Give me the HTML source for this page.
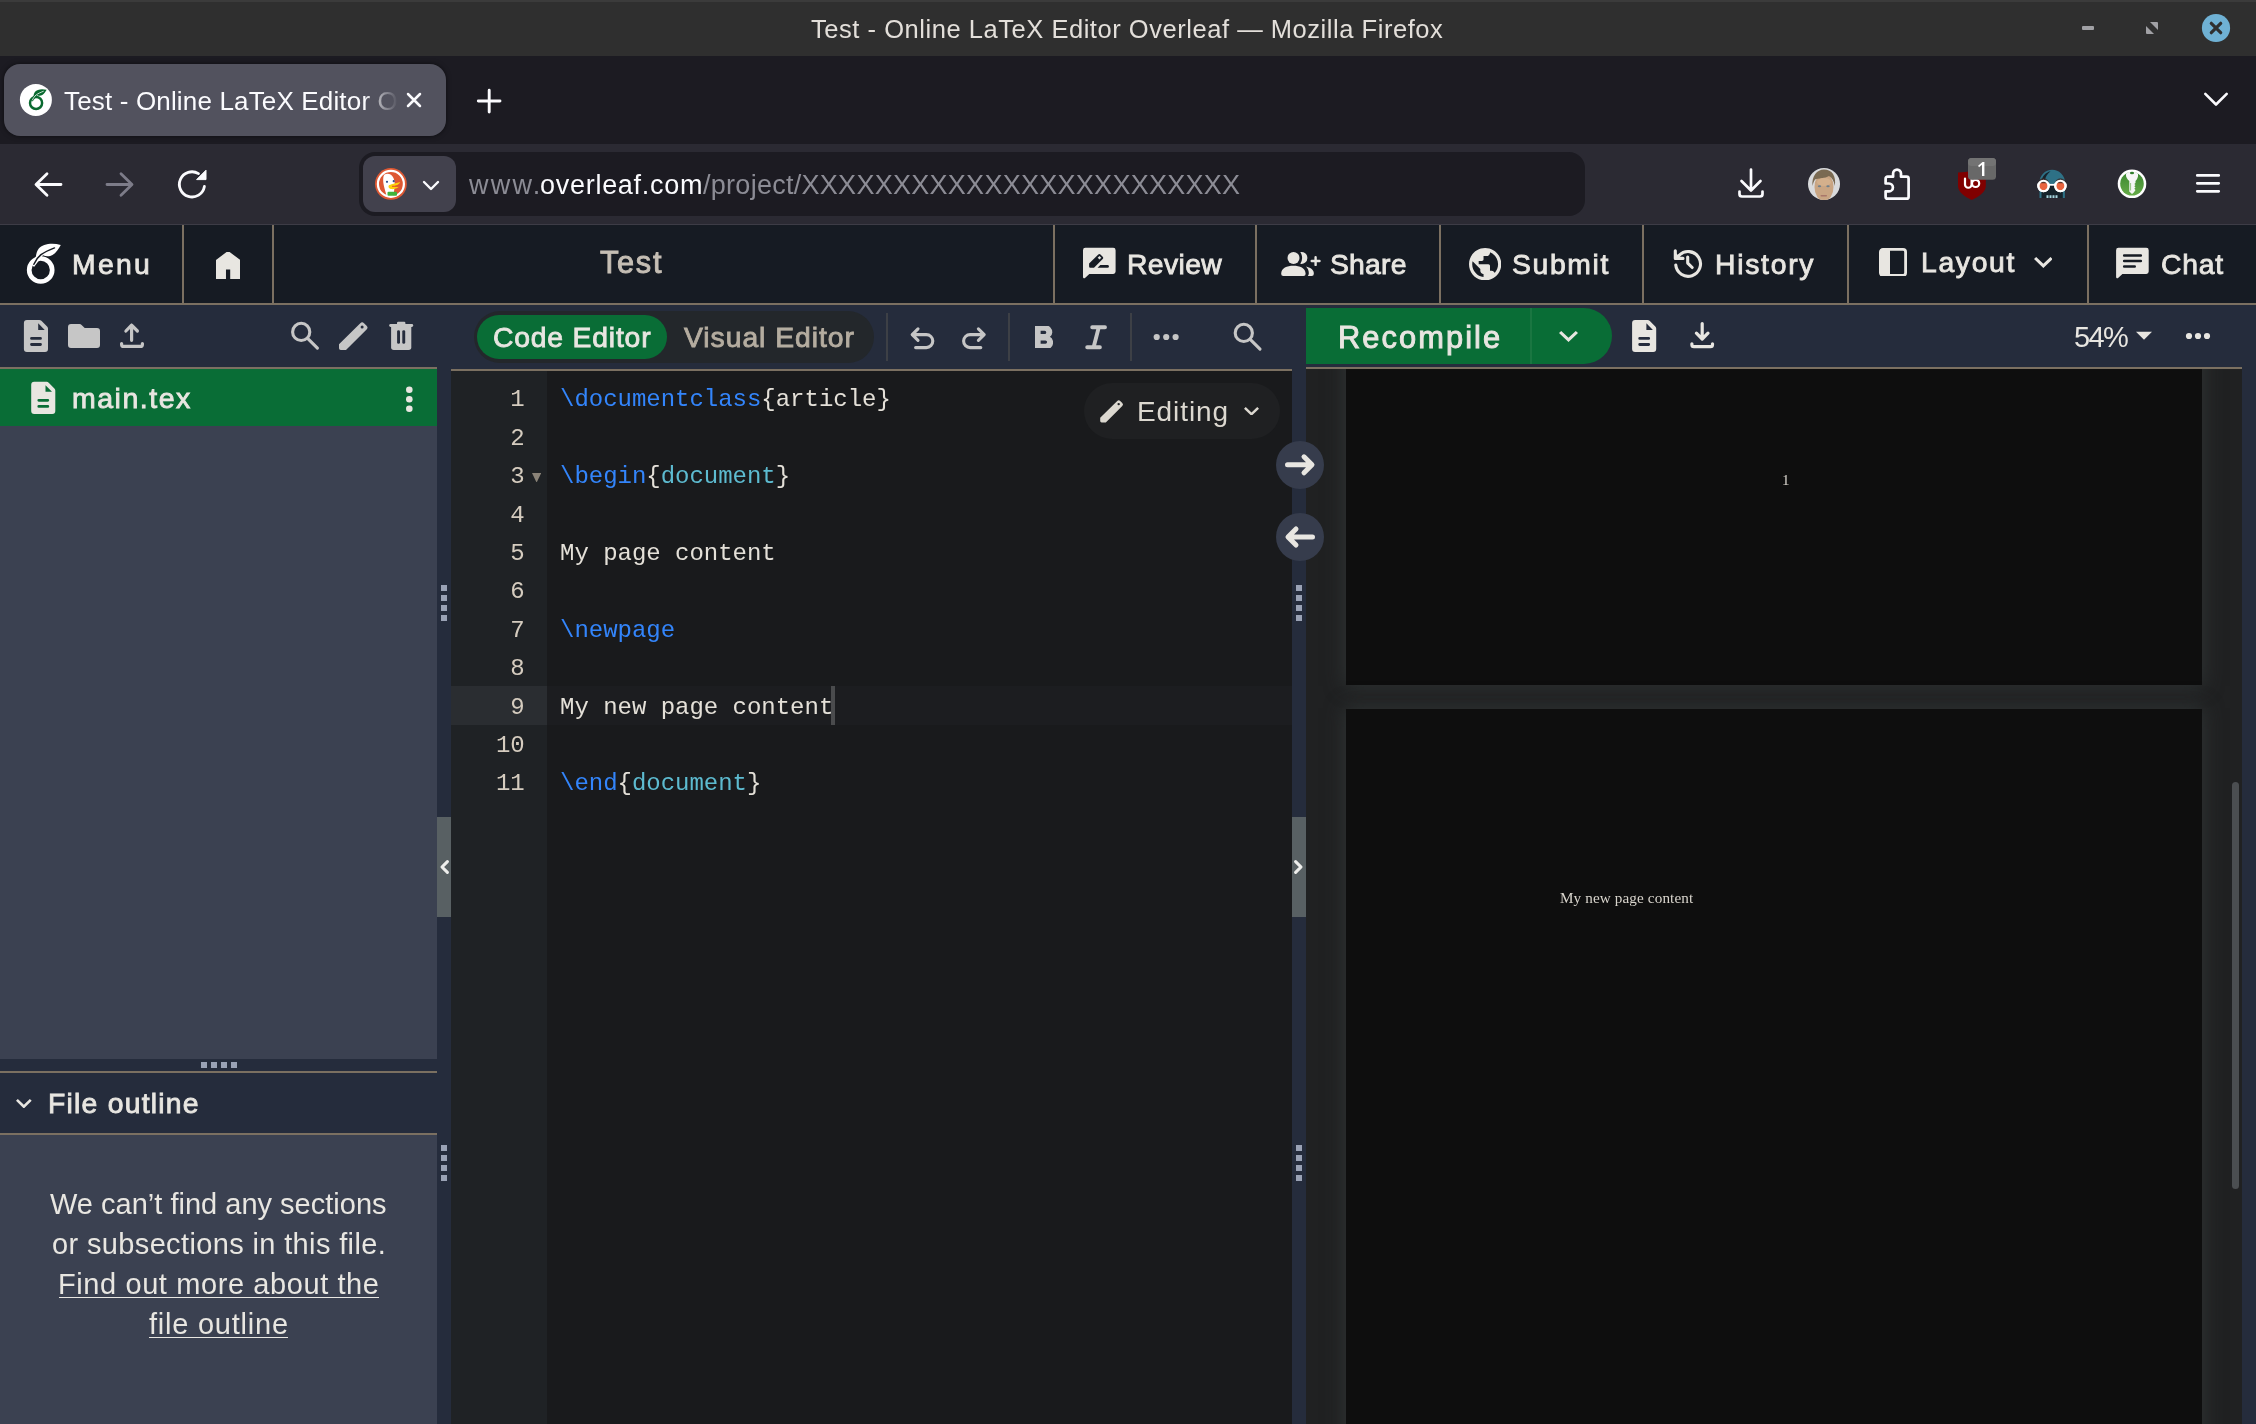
<!DOCTYPE html>
<html><head><meta charset="utf-8"><title>Test - Online LaTeX Editor Overleaf</title>
<style>
html,body{margin:0;padding:0;background:#191a1c;}
body{width:2256px;height:1424px;position:relative;overflow:hidden;font-family:'Liberation Sans', sans-serif;}
.b{position:absolute;display:block;}
.t{position:absolute;white-space:nowrap;margin:0;padding:0;will-change:transform;}
.ln{position:absolute;white-space:pre;will-change:transform;font:400 24px/38.4px 'Liberation Mono', monospace;letter-spacing:-0.02px;}
</style></head><body>
<div class="b" style="left:0px;top:0px;width:2256px;height:56px;background:#2f2f2f;"></div>
<div class="b" style="left:0px;top:0px;width:2256px;height:2px;background:#3b3b3b;"></div>
<div class="b" style="left:0px;top:56px;width:2256px;height:88px;background:#1c1b22;"></div>
<div class="b" style="left:4px;top:64px;width:442px;height:72px;background:#52525e;border-radius:16px;box-shadow:0 0 5px rgba(0,0,0,.55);"></div>
<div class="b" style="left:0px;top:144px;width:2256px;height:80px;background:#2b2a33;"></div>
<div class="b" style="left:359px;top:152px;width:1226px;height:64px;background:#1c1b22;border-radius:16px;"></div>
<div class="b" style="left:363px;top:156px;width:93px;height:56px;background:#42414d;border-radius:12px;"></div>
<div class="b" style="left:0px;top:224px;width:2256px;height:1px;background:#3d3c46;"></div>
<div class="b" style="left:0px;top:225px;width:2256px;height:78px;background:#161b23;"></div>
<div class="b" style="left:0px;top:303px;width:2256px;height:2px;background:#7b7061;"></div>
<div class="b" style="left:182px;top:225px;width:2px;height:78px;background:#7b7061;"></div>
<div class="b" style="left:272px;top:225px;width:2px;height:78px;background:#7b7061;"></div>
<div class="b" style="left:1053px;top:225px;width:2px;height:78px;background:#7b7061;"></div>
<div class="b" style="left:1255px;top:225px;width:2px;height:78px;background:#7b7061;"></div>
<div class="b" style="left:1439px;top:225px;width:2px;height:78px;background:#7b7061;"></div>
<div class="b" style="left:1642px;top:225px;width:2px;height:78px;background:#7b7061;"></div>
<div class="b" style="left:1847px;top:225px;width:2px;height:78px;background:#7b7061;"></div>
<div class="b" style="left:2087px;top:225px;width:2px;height:78px;background:#7b7061;"></div>
<div class="b" style="left:0px;top:305px;width:2256px;height:1119px;background:#252c3c;"></div>
<div class="b" style="left:0px;top:367px;width:437px;height:2px;background:#7b7061;"></div>
<div class="b" style="left:0px;top:369px;width:437px;height:690px;background:#3b4151;"></div>
<div class="b" style="left:0px;top:369px;width:437px;height:57px;background:#096d36;"></div>
<div class="b" style="left:0px;top:1071px;width:437px;height:2px;background:#7b7061;"></div>
<div class="b" style="left:0px;top:1133px;width:437px;height:2px;background:#7b7061;"></div>
<div class="b" style="left:0px;top:1135px;width:437px;height:289px;background:#3b4151;"></div>
<div class="b" style="left:201px;top:1062px;width:6px;height:6px;background:#9aa2b5;"></div>
<div class="b" style="left:211px;top:1062px;width:6px;height:6px;background:#9aa2b5;"></div>
<div class="b" style="left:221px;top:1062px;width:6px;height:6px;background:#9aa2b5;"></div>
<div class="b" style="left:231px;top:1062px;width:6px;height:6px;background:#9aa2b5;"></div>
<div class="b" style="left:441px;top:585px;width:6px;height:6px;background:#9aa2b5;"></div>
<div class="b" style="left:441px;top:595px;width:6px;height:6px;background:#9aa2b5;"></div>
<div class="b" style="left:441px;top:605px;width:6px;height:6px;background:#9aa2b5;"></div>
<div class="b" style="left:441px;top:615px;width:6px;height:6px;background:#9aa2b5;"></div>
<div class="b" style="left:441px;top:1145px;width:6px;height:6px;background:#9aa2b5;"></div>
<div class="b" style="left:441px;top:1155px;width:6px;height:6px;background:#9aa2b5;"></div>
<div class="b" style="left:441px;top:1165px;width:6px;height:6px;background:#9aa2b5;"></div>
<div class="b" style="left:441px;top:1175px;width:6px;height:6px;background:#9aa2b5;"></div>
<div class="b" style="left:1296px;top:585px;width:6px;height:6px;background:#9aa2b5;"></div>
<div class="b" style="left:1296px;top:595px;width:6px;height:6px;background:#9aa2b5;"></div>
<div class="b" style="left:1296px;top:605px;width:6px;height:6px;background:#9aa2b5;"></div>
<div class="b" style="left:1296px;top:615px;width:6px;height:6px;background:#9aa2b5;"></div>
<div class="b" style="left:1296px;top:1145px;width:6px;height:6px;background:#9aa2b5;"></div>
<div class="b" style="left:1296px;top:1155px;width:6px;height:6px;background:#9aa2b5;"></div>
<div class="b" style="left:1296px;top:1165px;width:6px;height:6px;background:#9aa2b5;"></div>
<div class="b" style="left:1296px;top:1175px;width:6px;height:6px;background:#9aa2b5;"></div>
<div class="b" style="left:437px;top:817px;width:14px;height:100px;background:#586063;"></div>
<div class="b" style="left:1292px;top:817px;width:14px;height:100px;background:#586063;"></div>
<div class="b" style="left:451px;top:369px;width:841px;height:2px;background:#7b7061;"></div>
<div class="b" style="left:451px;top:371px;width:841px;height:1053px;background:#191a1c;"></div>
<div class="b" style="left:451px;top:371px;width:96px;height:1053px;background:#1f2225;"></div>
<div class="b" style="left:451px;top:686px;width:96px;height:39px;background:#2a2d31;"></div>
<div class="b" style="left:547px;top:686px;width:745px;height:39px;background:#1c1d20;"></div>
<div class="b" style="left:831px;top:686px;width:4px;height:39px;background:#4a4b4d;"></div>
<div class="b" style="left:474px;top:311px;width:400px;height:52px;background:#23272b;border-radius:26px;"></div>
<div class="b" style="left:477px;top:315px;width:190px;height:44px;background:#096d36;border-radius:22px;"></div>
<div class="b" style="left:886px;top:313px;width:2px;height:48px;background:#3d4046;"></div>
<div class="b" style="left:1008px;top:313px;width:2px;height:48px;background:#3d4046;"></div>
<div class="b" style="left:1130px;top:313px;width:2px;height:48px;background:#3d4046;"></div>
<div class="b" style="left:1084px;top:383px;width:196px;height:56px;background:#1f2022;border-radius:28px;"></div>
<div class="b" style="left:1306px;top:367px;width:936px;height:2px;background:#7b7061;"></div>
<div class="b" style="left:1306px;top:369px;width:936px;height:1055px;background:#202122;overflow:hidden;"></div>
<div class="b" style="left:1306px;top:369px;width:936px;height:1055px;overflow:hidden;"><div class="b" style="left:40px;top:-40px;width:856px;height:356px;background:#0e0e0e;box-shadow:0 0 18px 1px #303535;"></div><div class="b" style="left:40px;top:340px;width:856px;height:800px;background:#0e0e0e;box-shadow:0 0 18px 1px #303535;"></div><div class="b" style="left:926px;top:413px;width:7px;height:407px;border-radius:4px;background:#4b4e51;"></div></div>
<div class="b" style="left:1306px;top:308px;width:306px;height:56px;background:#096d36;border-radius:0 28px 28px 0;"></div>
<div class="b" style="left:1530px;top:308px;width:2px;height:56px;background:#1a7641;"></div>
<div class="b" style="left:1276px;top:441px;width:48px;height:48px;background:#363c4c;border-radius:50%;"></div>
<div class="b" style="left:1276px;top:513px;width:48px;height:48px;background:#363c4c;border-radius:50%;"></div>
<div class="b" style="left:2082px;top:26px;width:12px;height:4px;background:#a1a1a5;border-radius:1px;"></div>
<svg class="b" style="left:0;top:0;" width="2256" height="1424" viewBox="0 0 2256 1424"><path d="M2150 22H2157a1 1 0 0 1 1 1V30Z M2146 26L2154 34H2147a1 1 0 0 1-1-1Z" fill="#a1a1a5"/><circle cx="2216" cy="28" r="14.100" fill="#6fb1d4"/><path d="M2211.300 23.300L2220.700 32.700M2220.700 23.300L2211.300 32.700" stroke="#2f2f2f" stroke-width="3.200" stroke-linecap="round"/></svg>
<svg class="b" style="left:0;top:0;" width="2256" height="1424" viewBox="0 0 2256 1424"><circle cx="35.900" cy="99.900" r="16" fill="#ffffff"/><path d="M408 94L420 106M420 94L408 106" stroke="#fbfbfe" stroke-width="2.500" stroke-linecap="round"/><path d="M478.300 101H500M489.200 90.300V112" stroke="#fbfbfe" stroke-width="2.900" stroke-linecap="round"/><path d="M2205.300 93.800L2216 104.500L2226.700 93.800" fill="none" stroke="#fbfbfe" stroke-width="2.600" stroke-linecap="round" stroke-linejoin="round"/></svg>
<svg class="b" style="left:21.53px;top:83.93px;" width="31.62" height="31.62" viewBox="0 0 60 60"><circle cx="26.7" cy="36" r="11.5" fill="none" stroke="#09692f" stroke-width="4.7"/><path d="M46.8 11 C38 8.6 28.500 10 24.800 14.600 C23 17 22.300 19.600 21.900 22.500 L16.500 29 L20 33 L29 21.300 C32 22.700 36 22.500 38.500 21 C42 19 44.500 15 46.800 11Z" fill="#09692f"/><path d="M40.500 13.900 C34.500 16.200 30.300 18.300 27 20.700 C23.300 23.600 21.300 26.800 19.900 30.300" fill="none" stroke="#ffffff" stroke-width="1.500" stroke-linecap="round"/></svg>
<svg class="b" style="left:0;top:0;" width="2256" height="1424" viewBox="0 0 2256 1424"><path d="M61 184.500H36.500M47 173.800L36 184.500L47 195.200" fill="none" stroke="#fbfbfe" stroke-width="2.800" stroke-linecap="round" stroke-linejoin="round"/><path d="M107 184.500H131.500M121 173.800L132 184.500L121 195.200" fill="none" stroke="#7d7c89" stroke-width="2.800" stroke-linecap="round" stroke-linejoin="round"/><path d="M204.400 186.500A12.600 12.600 0 1 1 198.500 173.600" fill="none" stroke="#fbfbfe" stroke-width="2.800" stroke-linecap="round"/><path d="M196.600 179.600H206V170.200Z" fill="#fbfbfe" stroke="#fbfbfe" stroke-width="1" stroke-linejoin="round"/><path d="M424 182L431 189L438 182" fill="none" stroke="#fbfbfe" stroke-width="2.400" stroke-linecap="round" stroke-linejoin="round"/><path d="M1751 169.500V190M1741.500 181L1751 190.500L1760.500 181" fill="none" stroke="#fbfbfe" stroke-width="2.700" stroke-linecap="round" stroke-linejoin="round"/><path d="M1739.500 191.500V194a2.500 2.500 0 0 0 2.500 2.500H1760a2.500 2.500 0 0 0 2.500-2.500V191.500" fill="none" stroke="#fbfbfe" stroke-width="2.700" stroke-linecap="round"/><path transform="translate(1884 168)" d="M3.600 8.700H9.100V5.600a3.950 3.950 0 0 1 7.900 0V8.700H22.600a2 2 0 0 1 2 2V28.700a2 2 0 0 1-2 2H3.600a2 2 0 0 1-2-2V23.300H5a3.900 3.900 0 0 0 0-7.800H1.600V10.700a2 2 0 0 1 2-2Z" fill="none" stroke="#fbfbfe" stroke-width="2.700" stroke-linejoin="round"/><path d="M2197.300 175.400H2218.700M2197.300 183.300H2218.700M2197.300 191.300H2218.700" stroke="#fbfbfe" stroke-width="2.800" stroke-linecap="round"/></svg>
<svg class="b" style="left:0;top:0;" width="2256" height="1424" viewBox="0 0 2256 1424"><circle cx="390.900" cy="183.900" r="15.900" fill="#de5833"/><circle cx="390.900" cy="183.900" r="13" fill="none" stroke="#ffffff" stroke-width="2.200"/><path d="M384.500 174.500C388 172.800 392 174.500 393.500 178C395 181.500 395 186 394.200 190L393.500 196.500L386.800 196.500C385.500 191 382.800 184 383.200 179.500C383.300 177.300 383.500 175.600 384.500 174.500Z" fill="#ffffff"/><path transform="translate(0 1.800)" d="M389 183.500C392 181.800 397 181.500 400.300 180.300C399.500 182.500 396.500 183.800 393.800 184.500C395.800 184.800 398 184.700 399.300 184.300C398.500 186.500 394.500 187.600 391.500 187.300C389 187.100 387.800 185 389 183.500Z" fill="#fdd20a"/><path d="M392 186.300H399" stroke="#e2572b" stroke-width="1.100"/><rect x="387.500" y="191.800" width="9.500" height="4" rx="1" fill="#3fb43c"/><circle cx="387" cy="181.800" r="1.100" fill="#2d4f8e"/><circle cx="393.700" cy="181.200" r="1.100" fill="#2d4f8e"/></svg>
<svg class="b" style="left:1808px;top:168px;" width="32" height="32" viewBox="0 0 32 32"><defs><clipPath id="av"><circle cx="16" cy="16" r="16"/></clipPath></defs><g clip-path="url(#av)"><rect width="32" height="32" fill="#d9dadc"/><ellipse cx="16" cy="19" rx="9.500" ry="14" fill="#c9a583"/><path d="M4.500 18C3.500 8 9 1.500 16 1.500C24 1.500 28.500 8 26.800 18C26 13 24 9.500 21 8C17 10.500 10 10 7 11.500C5.800 13.500 5 15.500 4.500 18Z" fill="#7a6a52"/><ellipse cx="16" cy="14" rx="7" ry="4" fill="#d4b08c"/><ellipse cx="11.500" cy="18.300" rx="1.700" ry="1" fill="#6e7f8c"/><ellipse cx="20" cy="18.300" rx="1.700" ry="1" fill="#6e7f8c"/><rect x="12.500" y="27" width="6.500" height="1.400" rx=".7" fill="#a9776a"/></g></svg>
<svg class="b" style="left:0;top:0;" width="2256" height="1424" viewBox="0 0 2256 1424"><path d="M1958 172.500C1963 172.500 1967.500 171.800 1971.800 170.800C1976 171.800 1980.500 172.500 1985.800 172.500V186C1985.800 192.500 1978 197 1971.800 200C1965.500 197 1958 192.500 1958 186Z" fill="#800000"/><path d="M1965 178.500V184.500a3.300 3.300 0 0 0 6.600 0V178.500" fill="none" stroke="#ffffff" stroke-width="2.200" stroke-linecap="round"/><circle cx="1975.600" cy="183.400" r="3.600" fill="none" stroke="#ffffff" stroke-width="2.200"/><rect x="1968" y="158" width="28" height="21.800" rx="3.500" fill="#686868"/><rect x="1968" y="158" width="28" height="8" rx="3.500" fill="#737373"/><path d="M1978.100 165.700L1982.500 162H1984.400V176.100H1982V164.700L1979 167.200Z" fill="#ffffff"/></svg>
<svg class="b" style="left:0;top:0;" width="2256" height="1424" viewBox="0 0 2256 1424"><path d="M2039.500 198V182.500a12.700 12.700 0 0 1 25.400 0V198Z" fill="#2e7186"/><path d="M2041.500 198V188H2062.800V198Z" fill="#15232b"/><path d="M2046.500 186L2052 184L2057.500 186V192H2046.500Z" fill="#15232b"/><path d="M2041.500 181C2042.500 176 2045.500 172.500 2050.500 171.200C2047 174 2045.300 177 2044.800 181Z" fill="#16242c"/><circle cx="2043.500" cy="186" r="5.200" fill="#e8643f" stroke="#ffffff" stroke-width="2.100"/><circle cx="2060.400" cy="186" r="5.200" fill="#e8643f" stroke="#ffffff" stroke-width="2.100"/><path d="M2038.300 183.300a5.200 5.200 0 0 1 10.400 0ZM2055.200 183.300a5.200 5.200 0 0 1 10.400 0Z" fill="#3a2522" opacity=".75"/><circle cx="2043.500" cy="186" r="5.200" fill="none" stroke="#ffffff" stroke-width="2.100"/><circle cx="2060.400" cy="186" r="5.200" fill="none" stroke="#ffffff" stroke-width="2.100"/><path d="M2048.700 184.800H2055.200" stroke="#ffffff" stroke-width="1.800"/><path d="M2046.500 196.600H2057.500" stroke="#a6d4de" stroke-width="2.600" stroke-dasharray="2 1"/></svg>
<svg class="b" style="left:0;top:0;" width="2256" height="1424" viewBox="0 0 2256 1424"><defs><linearGradient id="kg" x1="0" y1="0" x2="0" y2="1"><stop offset="0" stop-color="#3a8630"/><stop offset="1" stop-color="#66ab48"/></linearGradient></defs><circle cx="2132" cy="183.800" r="14.300" fill="#ffffff"/><circle cx="2132" cy="183.800" r="11.800" fill="url(#kg)"/><path d="M2126 174C2127 171 2137 171 2138 174C2138.500 177 2137 179.500 2135.500 181L2135.500 183L2134.300 184L2135.500 185L2134.300 186.300L2135.500 187.500L2134.300 188.700L2135.500 190L2133.800 192.500L2132 194L2129.300 191.500V181C2127.500 179.500 2125.500 177 2126 174Z" fill="#f6f6f6"/><ellipse cx="2132" cy="173" rx="2.100" ry="1.300" fill="#2f7d2a"/><path d="M2130.600 183V190.500" stroke="#7bb562" stroke-width=".8"/></svg>
<svg class="b" style="left:14px;top:234px;" width="60" height="60" viewBox="0 0 60 60"><circle cx="26.7" cy="36" r="11.5" fill="none" stroke="#ffffff" stroke-width="4.7"/><path d="M46.8 11 C38 8.6 28.500 10 24.800 14.600 C23 17 22.300 19.600 21.900 22.500 L16.500 29 L20 33 L29 21.300 C32 22.700 36 22.500 38.500 21 C42 19 44.500 15 46.800 11Z" fill="#ffffff"/><path d="M40.500 13.900 C34.500 16.200 30.300 18.300 27 20.700 C23.300 23.600 21.300 26.800 19.900 30.300" fill="none" stroke="#161b23" stroke-width="1.500" stroke-linecap="round"/></svg>
<svg class="b" style="left:215.8px;top:251.7px;" width="24.19999999999999" height="27.30000000000001" viewBox="4 3 16 18" preserveAspectRatio="none"><path d="M4 21V9l8-6 8 6v12h-6v-7h-4v7H4Z" fill="#e8e6e1" stroke="#e8e6e1" stroke-width="1.200" stroke-linejoin="round"/></svg>
<svg class="b" style="left:0;top:0;" width="2256" height="1424" viewBox="0 0 2256 1424"><path d="M1085.4 247.800H1113.2a2.400 2.400 0 0 1 2.400 2.400V271.500a2.400 2.400 0 0 1-2.400 2.400H1089.3L1085.0 278a1.200 1.200 0 0 1-2-.900V250.200a2.400 2.400 0 0 1 2.400-2.400Z" fill="#e8e6e1"/><path d="M1089.100 263.400L1098.300 254.600a1.600 1.600 0 0 1 2.200 0L1102.700 256.800a1.600 1.600 0 0 1 0 2.200L1094 267.700H1090.300a1.200 1.200 0 0 1-1.200-1.200Z" fill="#161b23"/><path d="M1099.500 256l1.800 1.800l-1.800 1.800l-1.800-1.800Z" fill="#e8e6e1"/><path d="M1100.300 265.100H1107.600a1.300 1.300 0 0 1 0 2.600H1097.600Z" fill="#161b23"/><circle cx="1293.500" cy="257.900" r="6" fill="#e8e6e1"/><path d="M1281.200 273.500C1281.200 268 1287 265.700 1293.400 265.700C1299.800 265.700 1305.600 268 1305.600 273.500V274a2.100 2.100 0 0 1-2.100 2.100H1283.300a2.100 2.100 0 0 1-2.100-2.100Z" fill="#e8e6e1"/><path d="M1300.300 252A6 6 0 1 1 1300.300 263.800A11.200 11.200 0 0 0 1300.300 252Z" fill="#e8e6e1"/><path d="M1306 266.500C1310 267.500 1313.800 269.500 1313.800 273V274a2.100 2.100 0 0 1-2.100 2.100H1307.800C1308.600 275 1308.800 274 1308.800 273C1308.800 270.500 1307.800 268.300 1306 266.500Z" fill="#e8e6e1"/><path d="M1311.700 261.050H1319.500M1315.600 257.200V264.900" stroke="#e8e6e1" stroke-width="2.400" stroke-linecap="round"/><path d="M1679.200 255.300A12.400 12.400 0 1 1 1675.750 264.980" fill="none" stroke="#e8e6e1" stroke-width="3.100" stroke-linecap="round"/><path d="M1675.300 250.800V258.400H1683" fill="none" stroke="#e8e6e1" stroke-width="3.100" stroke-linecap="round" stroke-linejoin="round"/><path d="M1675.300 252.500V258.400H1681.500Z" fill="#e8e6e1"/><path d="M1687.700 257V263.100L1692.200 267.500" fill="none" stroke="#e8e6e1" stroke-width="3.100" stroke-linecap="round" stroke-linejoin="round"/><path d="M2118.5 247.800H2146.3a2.400 2.400 0 0 1 2.400 2.400V271.500a2.400 2.400 0 0 1-2.400 2.400H2122.4L2118.1 278a1.200 1.200 0 0 1-2-.900V250.200a2.400 2.400 0 0 1 2.400-2.400Z" fill="#e8e6e1"/><path d="M2124.200 255.500H2140.800M2124.200 261H2140.800M2124.200 266.500H2134.700" stroke="#161b23" stroke-width="2.600" stroke-linecap="round"/></svg>
<svg class="b" style="left:1468.7px;top:247.8px;" width="32.299999999999955" height="32.39999999999998" viewBox="2 2 20 20" preserveAspectRatio="none"><path d="M12 2C6.480 2 2 6.480 2 12s4.480 10 10 10 10-4.480 10-10S17.520 2 12 2zm-1 17.930c-3.950-.490-7-3.850-7-7.930 0-.620.080-1.210.210-1.790L9 15v1c0 1.100.900 2 2 2v1.930zm6.900-2.540c-.260-.810-1-1.390-1.900-1.390h-1v-3c0-.550-.450-1-1-1H8v-2h2c.550 0 1-.450 1-1V7h2c1.100 0 2-.900 2-2v-.410c2.930 1.190 5 4.060 5 7.410 0 2.080-.800 3.970-2.100 5.390z" fill="#e8e6e1"/></svg>
<svg class="b" style="left:1879.2px;top:247.5px;" width="28.0" height="28.80000000000001" viewBox="0 0 28 29" preserveAspectRatio="none"><rect x="1.400" y="1.400" width="25.200" height="26.200" rx="2.600" fill="none" stroke="#e8e6e1" stroke-width="2.800"/><rect x="1.400" y="1.400" width="9.600" height="26.200" fill="#e8e6e1"/></svg>
<svg class="b" style="left:2033.6px;top:257px;" width="18.700000000000273" height="11" viewBox="6 8.59 12 7.41" preserveAspectRatio="none"><path d="M16.590 8.590L12 13.170 7.410 8.590 6 10l6 6 6-6z" fill="#e8e6e1"/></svg>
<svg class="b" style="left:0;top:0;" width="2256" height="1424" viewBox="0 0 2256 1424"><g transform="translate(23.9 319.9)"><path d="M3 0H15.400a3 3 0 0 1 2.100.900L23.200 6.600a3 3 0 0 1 .900 2.100V29.200a3 3 0 0 1-3 3H3a3 3 0 0 1-3-3V3a3 3 0 0 1 3-3Z" fill="#c6c6c6"/><path d="M14.300 3.400V10H20.800Z" fill="#252c3c"/><path d="M7.600 18.500H16.600M7.600 24.600H16.600" stroke="#252c3c" stroke-width="2.800" stroke-linecap="round"/></g><path d="M71 324H79.500a3 3 0 0 1 2.100.900L84.700 328H97a3 3 0 0 1 3 3V345a3 3 0 0 1-3 3H71a3 3 0 0 1-3-3V327a3 3 0 0 1 3-3Z" fill="#c6c6c6"/><path d="M131.600 325V340.300M125.900 331L131.600 325.200L137.400 331" fill="none" stroke="#c6c6c6" stroke-width="3.200" stroke-linecap="round" stroke-linejoin="round"/><path d="M121.6 343.5V344.4a2 2 0 0 0 2 2H140.4a2 2 0 0 0 2-2V343.5" fill="none" stroke="#c6c6c6" stroke-width="3.200" stroke-linecap="round"/><g transform="translate(0 0)"><circle cx="301.200" cy="331.900" r="8.600" fill="none" stroke="#c6c6c6" stroke-width="3.100"/><path d="M307.600 338.300L317.400 348.100" stroke="#c6c6c6" stroke-width="3.100" stroke-linecap="round"/></g><g transform="translate(339 322) scale(1)"><path d="M0 22.300L21.300 1.200a2.600 2.600 0 0 1 3.700 0L27.600 3.800a2.600 2.600 0 0 1 0 3.700L7 28H1.800a1.800 1.800 0 0 1-1.800-1.800Z" fill="#c6c6c6"/><circle cx="23.100" cy="5.100" r="1.500" fill="#252c3c"/></g><rect x="389.200" y="324" width="24" height="2.900" rx="1.400" fill="#c6c6c6"/><rect x="397" y="321.800" width="8.400" height="3.500" rx="1.200" fill="#c6c6c6"/><path d="M391.100 326.500H411.300V347.300a2.700 2.700 0 0 1-2.700 2.700H393.800a2.700 2.700 0 0 1-2.700-2.700Z" fill="#c6c6c6"/><rect x="397.100" y="330.200" width="2.900" height="13.600" rx="1.400" fill="#252c3c"/><rect x="402.300" y="330.200" width="2.900" height="13.600" rx="1.400" fill="#252c3c"/><g transform="translate(31.2 381.8)"><path d="M3 0H15.400a3 3 0 0 1 2.100.900L23.200 6.600a3 3 0 0 1 .900 2.100V29.200a3 3 0 0 1-3 3H3a3 3 0 0 1-3-3V3a3 3 0 0 1 3-3Z" fill="#e8e6e1"/><path d="M14.300 3.400V10H20.800Z" fill="#096d36"/><path d="M7.600 18.500H16.600M7.600 24.600H16.600" stroke="#096d36" stroke-width="2.800" stroke-linecap="round"/></g><circle cx="409.300" cy="389.700" r="3.300" fill="#e8e6e1"/><circle cx="409.300" cy="399.200" r="3.300" fill="#e8e6e1"/><circle cx="409.300" cy="408.700" r="3.300" fill="#e8e6e1"/></svg>
<svg class="b" style="left:0;top:0;" width="2256" height="1424" viewBox="0 0 2256 1424"><path d="M918 328.900L912.200 334.600L918 340.300M912.800 334.600H926.300a6.500 6.500 0 0 1 0 13H915.600" fill="none" stroke="#c6c6c6" stroke-width="3.100" stroke-linecap="round" stroke-linejoin="round"/><path d="M978.400 328.900L984.200 334.600L978.400 340.300M983.600 334.600H970.100a6.500 6.500 0 0 0 0 13H980.800" fill="none" stroke="#c6c6c6" stroke-width="3.100" stroke-linecap="round" stroke-linejoin="round"/><path d="M1087.200 347.200H1099.900M1092.200 327.200H1105M1098.800 327.200L1093.600 347.200" fill="none" stroke="#c6c6c6" stroke-width="3.900" stroke-linecap="round"/><circle cx="1156.7" cy="337" r="3.100" fill="#c6c6c6"/><circle cx="1166.2" cy="337" r="3.100" fill="#c6c6c6"/><circle cx="1175.6" cy="337" r="3.100" fill="#c6c6c6"/><g transform="translate(942.6 1)"><circle cx="301.200" cy="331.900" r="8.600" fill="none" stroke="#c6c6c6" stroke-width="3.100"/><path d="M307.600 338.300L317.400 348.100" stroke="#c6c6c6" stroke-width="3.100" stroke-linecap="round"/></g></svg>
<svg class="b" style="left:1035.4px;top:325.9px;" width="17.299999999999955" height="22.5" viewBox="7 4 10.75 14" preserveAspectRatio="none"><path d="M15.600 10.790c.970-.670 1.650-1.770 1.650-2.790 0-2.260-1.750-4-4-4H7v14h7.040c2.090 0 3.710-1.700 3.710-3.790 0-1.520-.860-2.820-2.150-3.420zM10 6.500h3c.830 0 1.500.670 1.500 1.500s-.670 1.500-1.500 1.500h-3v-3zm3.500 9H10v-3h3.500c.830 0 1.500.670 1.500 1.500s-.670 1.500-1.500 1.500z" fill="#c6c6c6" stroke="#c6c6c6" stroke-width="1" stroke-linejoin="round"/></svg>
<svg class="b" style="left:0;top:0;" width="2256" height="1424" viewBox="0 0 2256 1424"><g transform="translate(1100.2 400) scale(0.8)"><path d="M0 22.300L21.300 1.200a2.600 2.600 0 0 1 3.700 0L27.600 3.800a2.600 2.600 0 0 1 0 3.700L7 28H1.800a1.800 1.800 0 0 1-1.800-1.800Z" fill="#dcd8d0"/><circle cx="23.100" cy="5.100" r="1.500" fill="#1f2023"/></g></svg>
<svg class="b" style="left:1244.2px;top:406.5px;" width="15.0" height="8.899999999999977" viewBox="6 8.59 12 7.41" preserveAspectRatio="none"><path d="M16.590 8.590L12 13.170 7.410 8.590 6 10l6 6 6-6z" fill="#dcd8d0"/></svg>
<svg class="b" style="left:1559px;top:330.6px;" width="19" height="11.0" viewBox="6 8.59 12 7.41" preserveAspectRatio="none"><path d="M16.590 8.590L12 13.170 7.410 8.590 6 10l6 6 6-6z" fill="#e8e6e1"/></svg>
<svg class="b" style="left:0;top:0;" width="2256" height="1424" viewBox="0 0 2256 1424"><g transform="translate(1632.1 319.9)"><path d="M3 0H15.400a3 3 0 0 1 2.100.900L23.200 6.600a3 3 0 0 1 .900 2.100V29.200a3 3 0 0 1-3 3H3a3 3 0 0 1-3-3V3a3 3 0 0 1 3-3Z" fill="#e8e6e1"/><path d="M14.300 3.400V10H20.800Z" fill="#252c3c"/><path d="M7.600 18.500H16.600M7.600 24.600H16.600" stroke="#252c3c" stroke-width="2.800" stroke-linecap="round"/></g><path d="M1702.200 323.600V338.500M1696.400 333.200L1702.200 339L1708 333.200" fill="none" stroke="#e8e6e1" stroke-width="3.200" stroke-linecap="round" stroke-linejoin="round"/><path d="M1691.9 343.8V344.7a2 2 0 0 0 2 2H1710.5a2 2 0 0 0 2-2V343.8" fill="none" stroke="#e8e6e1" stroke-width="3.200" stroke-linecap="round"/><path d="M2136 331.800H2152L2144 339.800Z" fill="#e8e6e1"/><circle cx="2189" cy="336" r="3.100" fill="#e8e6e1"/><circle cx="2198" cy="336" r="3.100" fill="#e8e6e1"/><circle cx="2207" cy="336" r="3.100" fill="#e8e6e1"/></svg>
<svg class="b" style="left:0;top:0;" width="2256" height="1424" viewBox="0 0 2256 1424"><path d="M1287.500 464.800H1311M1304 456.800L1312 464.800L1304 472.800" fill="none" stroke="#e8e6e1" stroke-width="5" stroke-linecap="round" stroke-linejoin="round"/><path d="M1312.500 537H1289M1296 529L1288 537L1296 545" fill="none" stroke="#e8e6e1" stroke-width="5" stroke-linecap="round" stroke-linejoin="round"/><path d="M447.400 861.600L442 867L447.400 872.400" fill="none" stroke="#eeeeec" stroke-width="3.100" stroke-linecap="round" stroke-linejoin="round"/><path d="M1295.600 861.600L1301 867L1295.600 872.400" fill="none" stroke="#eeeeec" stroke-width="3.100" stroke-linecap="round" stroke-linejoin="round"/></svg>
<svg class="b" style="left:16.3px;top:1098.7px;" width="15.7" height="9.5" viewBox="6 8.59 12 7.41" preserveAspectRatio="none"><path d="M16.590 8.590L12 13.170 7.410 8.590 6 10l6 6 6-6z" fill="#e8e6e1"/></svg>
<div class="b" style="left:59px;top:1296.8px;width:320px;height:1.6000000000001364px;background:#e8e6e1;"></div>
<div class="b" style="left:149px;top:1336.8px;width:139px;height:1.6000000000001364px;background:#e8e6e1;"></div>
<div class="ln" style="left:451px;width:73.7px;top:381.3px;text-align:right;color:#d5ccbf;">1</div>
<div class="ln" style="left:559.6px;top:381.3px;"><span style="color:#3385fb">\documentclass</span><span style="color:#e4e0d8">{article}</span></div>
<div class="ln" style="left:451px;width:73.7px;top:419.7px;text-align:right;color:#d5ccbf;">2</div>
<div class="ln" style="left:451px;width:73.7px;top:458.1px;text-align:right;color:#d5ccbf;">3</div>
<div class="ln" style="left:559.6px;top:458.1px;"><span style="color:#3385fb">\begin</span><span style="color:#e4e0d8">{</span><span style="color:#5dbbd0">document</span><span style="color:#e4e0d8">}</span></div>
<div class="ln" style="left:451px;width:73.7px;top:496.5px;text-align:right;color:#d5ccbf;">4</div>
<div class="ln" style="left:451px;width:73.7px;top:534.9px;text-align:right;color:#d5ccbf;">5</div>
<div class="ln" style="left:559.6px;top:534.9px;"><span style="color:#e4e0d8">My page content</span></div>
<div class="ln" style="left:451px;width:73.7px;top:573.3px;text-align:right;color:#d5ccbf;">6</div>
<div class="ln" style="left:451px;width:73.7px;top:611.7px;text-align:right;color:#d5ccbf;">7</div>
<div class="ln" style="left:559.6px;top:611.7px;"><span style="color:#3385fb">\newpage</span></div>
<div class="ln" style="left:451px;width:73.7px;top:650.1px;text-align:right;color:#d5ccbf;">8</div>
<div class="ln" style="left:451px;width:73.7px;top:688.5px;text-align:right;color:#d5ccbf;">9</div>
<div class="ln" style="left:559.6px;top:688.5px;"><span style="color:#e4e0d8">My new page content</span></div>
<div class="ln" style="left:451px;width:73.7px;top:726.9px;text-align:right;color:#d5ccbf;">10</div>
<div class="ln" style="left:451px;width:73.7px;top:765.3px;text-align:right;color:#d5ccbf;">11</div>
<div class="ln" style="left:559.6px;top:765.3px;"><span style="color:#3385fb">\end</span><span style="color:#e4e0d8">{</span><span style="color:#5dbbd0">document</span><span style="color:#e4e0d8">}</span></div>
<svg class="b" style="left:531.6px;top:472.6px;" width="9.199999999999932" height="9.599999999999966" viewBox="0 0 10 10" preserveAspectRatio="none"><path d="M0 0H10L5 10Z" fill="#8a8378"/></svg>
<div class="t" id="wtitle" style="left:811.00px;top:17.05px;font:400 25.5px/25.5px 'Liberation Sans', sans-serif;color:#e3dfda;letter-spacing:0.539px;">Test - Online LaTeX Editor Overleaf — Mozilla Firefox</div>
<div class="t" id="ttitle" style="left:64.00px;top:88.00px;font:400 26px/26px 'Liberation Sans', sans-serif;color:#fbfbfe;letter-spacing:0.000px;letter-spacing:0.16px;width:338px;overflow:hidden;-webkit-mask-image:linear-gradient(90deg,#000 300px,transparent 334px);mask-image:linear-gradient(90deg,#000 300px,transparent 334px);">Test - Online LaTeX Editor Overleaf</div>
<div class="t" id="url1" style="left:469.00px;top:172.00px;font:400 27px/27px 'Liberation Sans', sans-serif;color:#8c8c95;letter-spacing:2.265px;">www.</div>
<div class="t" id="url2" style="left:539.90px;top:172.00px;font:400 27px/27px 'Liberation Sans', sans-serif;color:#fbfbfe;letter-spacing:0.721px;">overleaf.com</div>
<div class="t" id="url3" style="left:702.60px;top:172.00px;font:400 27px/27px 'Liberation Sans', sans-serif;color:#8c8c95;letter-spacing:0.277px;">/project/XXXXXXXXXXXXXXXXXXXXXXXX</div>
<div class="t" id="menu" style="left:72.22px;top:250.05px;font:400 28.3px/28.3px 'Liberation Sans', sans-serif;color:#e8e6e1;letter-spacing:2.335px;-webkit-text-stroke:0.85px #e8e6e1;">Menu</div>
<div class="t" id="ptitle" style="left:600.46px;top:247.65px;font:400 30.7px/30.7px 'Liberation Sans', sans-serif;color:#c5beb4;letter-spacing:1.709px;-webkit-text-stroke:0.92px #c5beb4;">Test</div>
<div class="t" id="review" style="left:1126.92px;top:250.05px;font:400 28.3px/28.3px 'Liberation Sans', sans-serif;color:#e8e6e1;letter-spacing:0.401px;-webkit-text-stroke:0.85px #e8e6e1;">Review</div>
<div class="t" id="share" style="left:1330.12px;top:250.05px;font:400 28.3px/28.3px 'Liberation Sans', sans-serif;color:#e8e6e1;letter-spacing:0.245px;-webkit-text-stroke:0.85px #e8e6e1;">Share</div>
<div class="t" id="submit" style="left:1512.42px;top:250.05px;font:400 28.3px/28.3px 'Liberation Sans', sans-serif;color:#e8e6e1;letter-spacing:1.669px;-webkit-text-stroke:0.85px #e8e6e1;">Submit</div>
<div class="t" id="history" style="left:1715.42px;top:250.05px;font:400 28.3px/28.3px 'Liberation Sans', sans-serif;color:#e8e6e1;letter-spacing:1.743px;-webkit-text-stroke:0.85px #e8e6e1;">History</div>
<div class="t" id="layout" style="left:1920.72px;top:247.75px;font:400 28.3px/28.3px 'Liberation Sans', sans-serif;color:#e8e6e1;letter-spacing:1.690px;-webkit-text-stroke:0.85px #e8e6e1;">Layout</div>
<div class="t" id="chat" style="left:2160.83px;top:250.05px;font:400 28.3px/28.3px 'Liberation Sans', sans-serif;color:#e8e6e1;letter-spacing:0.780px;-webkit-text-stroke:0.85px #e8e6e1;">Chat</div>
<div class="t" id="codeed" style="left:493.43px;top:323.05px;font:400 28.3px/28.3px 'Liberation Sans', sans-serif;color:#e8e6e1;letter-spacing:0.814px;-webkit-text-stroke:0.85px #e8e6e1;">Code Editor</div>
<div class="t" id="vised" style="left:684.12px;top:323.05px;font:400 28.3px/28.3px 'Liberation Sans', sans-serif;color:#b5ada0;letter-spacing:0.961px;-webkit-text-stroke:0.85px #b5ada0;">Visual Editor</div>
<div class="t" id="recompile" style="left:1337.96px;top:322.70px;font:400 30.8px/30.8px 'Liberation Sans', sans-serif;color:#e8e6e1;letter-spacing:2.077px;-webkit-text-stroke:0.92px #e8e6e1;">Recompile</div>
<div class="t" id="zoom" style="left:2073.60px;top:322.50px;font:400 29px/29px 'Liberation Sans', sans-serif;color:#e8e6e1;letter-spacing:-1.578px;">54%</div>
<div class="t" id="maintex" style="left:72.22px;top:384.45px;font:400 28.5px/28.5px 'Liberation Sans', sans-serif;color:#e8e6e1;letter-spacing:1.513px;-webkit-text-stroke:0.85px #e8e6e1;">main.tex</div>
<div class="t" id="editing" style="left:1136.60px;top:398.20px;font:400 28px/28px 'Liberation Sans', sans-serif;color:#dcd8d0;letter-spacing:0.926px;">Editing</div>
<div class="t" id="foutline" style="left:47.92px;top:1088.85px;font:400 28.3px/28.3px 'Liberation Sans', sans-serif;color:#e8e6e1;letter-spacing:1.250px;-webkit-text-stroke:0.85px #e8e6e1;">File outline</div>
<div class="t" id="o1" style="left:50.20px;top:1190.00px;font:400 29px/29px 'Liberation Sans', sans-serif;color:#e8e6e1;letter-spacing:0.006px;">We can’t find any sections</div>
<div class="t" id="o2" style="left:52.00px;top:1229.70px;font:400 29px/29px 'Liberation Sans', sans-serif;color:#e8e6e1;letter-spacing:0.362px;">or subsections in this file.</div>
<div class="t" id="o3" style="left:58.00px;top:1269.80px;font:400 29px/29px 'Liberation Sans', sans-serif;color:#e8e6e1;letter-spacing:0.592px;">Find out more about the</div>
<div class="t" id="o4" style="left:149.30px;top:1309.70px;font:400 29px/29px 'Liberation Sans', sans-serif;color:#e8e6e1;letter-spacing:0.768px;">file outline</div>
<div class="t" id="pdf1" style="left:1781.90px;top:472.50px;font:400 15px/15px 'Liberation Serif', serif;color:#d8d4cc;letter-spacing:0.000px;">1</div>
<div class="t" id="pdf2" style="left:1560.00px;top:889.80px;font:400 15.2px/15.2px 'Liberation Serif', serif;color:#d8d4cc;letter-spacing:0.114px;">My new page content</div>
</body></html>
